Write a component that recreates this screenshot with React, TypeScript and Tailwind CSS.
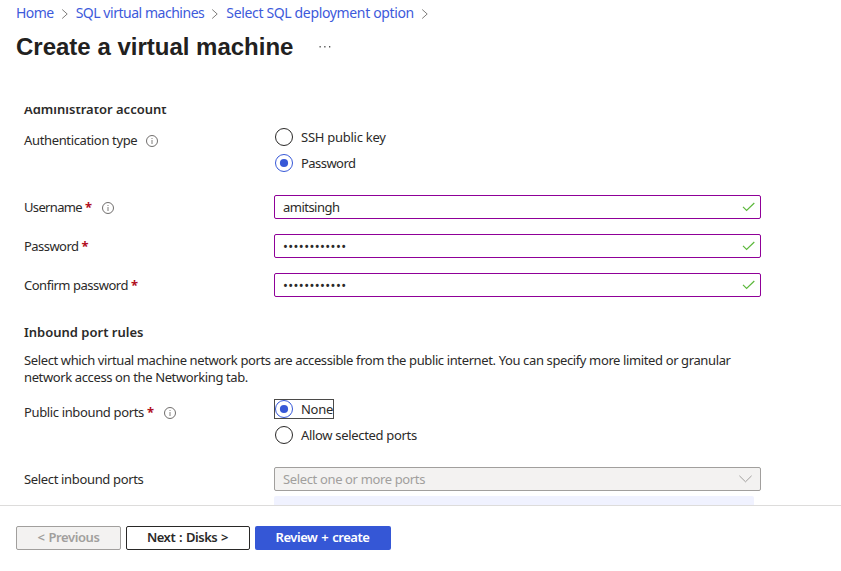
import type { ReactNode } from "react";

function Crumb({ children, className }: { children: string; className: string }) {
  return (
    <>
      <a className={`block shrink-0 text-[14px] whitespace-nowrap text-[#3d5adb] ${className}`}>{children}</a>
      <svg className="mt-[2px] block w-[22px] shrink-0" height="12" viewBox="0 0 22 12" fill="none" stroke="#706e6c" strokeWidth="0.9">
        <path d="M8.2 1.5l5 4.5-5 4.5" />
      </svg>
    </>
  );
}

function Info() {
  return (
    <svg className="ml-[9px] shrink-0" width="12" height="12" viewBox="0 0 12 12" fill="none" stroke="#605e5c">
      <circle cx="6" cy="6" r="5.5" strokeWidth="0.9" />
      <path d="M6 5v4" strokeWidth="0.8" />
      <path d="M6 3v1" strokeWidth="0.8" />
    </svg>
  );
}

function Label({ text, className, required, info }: { text: string; className: string; required?: boolean; info?: boolean }) {
  return (
    <div className="flex h-6 w-[250px] shrink-0 items-center pt-[2px]">
      <span className={`whitespace-nowrap ${className}`}>{text}</span>
      {required && <span className="-mt-[3px] ml-[3px] w-[8px] text-[13px] leading-4 font-bold text-[#b10e1e]">*</span>}
      {info && <Info />}
    </div>
  );
}

function Radio({ checked, text, className }: { checked?: boolean; text: string; className: string }) {
  return (
    <div className="flex h-[18px] items-center">
      <svg className="shrink-0" width="18" height="18" viewBox="0 0 18 18" fill="none">
        <circle cx="9" cy="9" r="8.5" stroke={checked ? "#3758d7" : "#292827"} />
        {checked && <circle cx="9" cy="9" r="4.1" fill="#3758d7" />}
      </svg>
      <span className={`ml-2 leading-[18px] whitespace-nowrap ${className}`}>{text}</span>
    </div>
  );
}

function Field({ children }: { children: ReactNode }) {
  return (
    <div className="flex h-6 w-[487px] items-center justify-between rounded-[2px] border border-[#8f0098] pr-[5px] pl-2">
      {children}
      <svg width="13" height="10" viewBox="0 0 13 10" fill="none" stroke="#5cb83c" strokeWidth="1.2">
        <path d="M1 4.9l3.6 3.6L12.3 1" />
      </svg>
    </div>
  );
}

export default function App() {
  return (
    <div className="flex h-[571px] w-[841px] flex-col overflow-hidden bg-white font-['Noto_Sans',sans-serif] text-[13px] text-[#2b2a29]">
      <nav className="flex h-[25px] items-center pl-4">
        <Crumb className="tracking-[-0.55px]">Home</Crumb>
        <Crumb className="tracking-[-0.47px]">SQL virtual machines</Crumb>
        <Crumb className="tracking-[-0.35px]">Select SQL deployment option</Crumb>
      </nav>
      <header className="flex h-[82px] pl-4">
        <h1 className="mt-[6px] h-8 font-['Liberation_Sans',sans-serif] text-[24px] leading-8 font-bold whitespace-nowrap text-[#222120]">
          Create a virtual machine
        </h1>
        <svg className="mt-[20px] ml-[26px]" width="12" height="4" viewBox="0 0 12 4" fill="#555">
          <path d="M.5 1h1.3v1.4H.5zM5.2 1h1.3v1.4H5.2zM10 1h1.3v1.4H10z" />
        </svg>
      </header>
      <main className="flex h-[398px] flex-col overflow-hidden pl-6">
        <h2 className="-mt-2 h-5 shrink-0 leading-5 font-semibold">Administrator account</h2>
        <div className="mt-[9px] flex h-[44px] shrink-0">
          <Label text="Authentication type" className="tracking-[-0.35px]" info />
          <div className="ml-px flex flex-col gap-2">
            <Radio text="SSH public key" className="tracking-[-0.26px]" />
            <Radio checked text="Password" className="tracking-[-0.55px]" />
          </div>
        </div>
        <div className="mt-[23px] flex shrink-0 flex-col gap-[15px]">
          <div className="flex">
            <Label text="Username" className="tracking-[-0.65px]" required info />
            <Field><span className="pt-[2px] tracking-[-0.52px]">amitsingh</span></Field>
          </div>
          <div className="flex">
            <Label text="Password" className="tracking-[-0.55px]" required />
            <Field><span className="pt-[2px] tracking-[0.4px]">••••••••••••</span></Field>
          </div>
          <div className="flex">
            <Label text="Confirm password" className="tracking-[-0.49px]" required />
            <Field><span className="pt-[2px] tracking-[0.4px]">••••••••••••</span></Field>
          </div>
        </div>
        <h2 className="mt-[25px] h-5 shrink-0 leading-5 font-semibold">Inbound port rules</h2>
        <p className="mt-[10px] shrink-0 leading-[17px] tracking-[-0.38px] whitespace-nowrap">
          Select which virtual machine network ports are accessible from the public internet. You can specify more limited or granular
          <br />
          network access on the Networking tab.
        </p>
        <div className="mt-[14px] flex h-[45px] shrink-0">
          <Label text="Public inbound ports" className="tracking-[-0.36px]" required info />
          <div className="-mt-px flex flex-col items-start">
            <div className="h-5 w-[60px] border border-[#4b4a49]">
              <Radio checked text="None" className="tracking-[-0.3px]" />
            </div>
            <div className="mt-[7px] ml-px">
              <Radio text="Allow selected ports" className="tracking-[-0.32px]" />
            </div>
          </div>
        </div>
        <div className="mt-[22px] flex shrink-0">
          <Label text="Select inbound ports" className="tracking-[-0.34px]" />
          <div className="flex h-6 w-[487px] items-center justify-between rounded-[2px] border border-[#a19f9d] bg-[#f3f2f1] pr-2 pl-2 text-[#a19f9d]">
            <span className="pt-[2px] tracking-[-0.36px]">Select one or more ports</span>
            <svg width="13" height="8" viewBox="0 0 13 8" fill="none" stroke="#a19f9d">
              <path d="M.4 .8l6.1 6 6.1-6" />
            </svg>
          </div>
        </div>
        <div className="mt-[5px] ml-[250px] h-10 w-[480px] shrink-0 rounded-[2px] bg-[#f0f2ff]" />
      </main>
      <footer className="flex h-[66px] gap-[5px] border-t border-[#dddcdb] pt-5 pl-4 font-semibold">
        <button className="h-6 w-[105px] rounded-[2px] border border-[#a19f9d] bg-[#f3f2f1] pb-[2px] leading-5 tracking-[-0.42px] text-[#a19f9d] [word-spacing:1px]">&lt; Previous</button>
        <button className="h-6 w-[124px] rounded-[2px] border border-[#292827] bg-white pr-px pb-[2px] pl-0 leading-5 tracking-[-0.5px] [word-spacing:1px]">Next : Disks &gt;</button>
        <button className="h-6 w-[136px] rounded-[2px] bg-[#3557d6] pr-px pb-[2px] leading-[22px] tracking-[-0.46px] text-white [word-spacing:1px]">Review + create</button>
      </footer>
    </div>
  );
}
